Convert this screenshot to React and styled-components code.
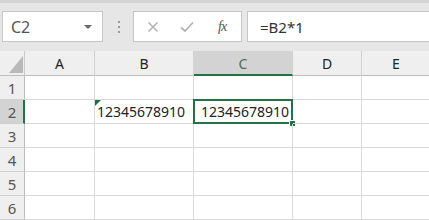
import React from "react";
import styled, { createGlobalStyle } from "styled-components";

const GREEN = "#217346";

const Global = createGlobalStyle`
  body {
    margin: 0;
    background: #ffffff;
    font-family: "Noto Sans", "Noto Sans CJK JP", sans-serif;
  }
`;

const Page = styled.div`
  width: 429px;
  height: 220px;
  overflow: hidden;
  background: #ffffff;
`;

// 数式バー
const Toolbar = styled.div`
  display: flex;
  align-items: center;
  height: 51px;
  box-sizing: border-box;
  border-top: 3px solid #d4d4d4;
  padding: 8px 0 9px 2px;
  background: #e6e6e6;
`;

const NameBox = styled.div`
  width: 101px;
  height: 31px;
  box-sizing: border-box;
  display: flex;
  align-items: center;
  justify-content: space-between;
  padding: 0 10px 0 8px;
  background: #fff;
  border: 1px solid #c6c6c6;
  color: #555;
  font-size: 16px;
`;

const Caret = styled.span`
  width: 0;
  height: 0;
  border-left: 4px solid transparent;
  border-right: 4px solid transparent;
  border-top: 4px solid #666;
  margin-top: 1px;
`;

const Grip = styled.div`
  display: flex;
  flex-direction: column;
  gap: 3px;
  margin: 0 13px 0 15px;
  span {
    width: 2px;
    height: 2px;
    background: #9a9a9a;
  }
`;

const ButtonGroup = styled.div`
  width: 109px;
  height: 31px;
  box-sizing: border-box;
  display: flex;
  align-items: center;
  background: #fff;
  border: 1px solid #c6c6c6;
  margin-right: 5px;
`;

const IconSlot = styled.div`
  width: ${(p) => p.$w}px;
  display: flex;
  justify-content: center;
  align-items: center;
  color: ${(p) => p.$color || "#b5b5b5"};
`;

const Fx = styled.span`
  font-family: "Liberation Serif", serif;
  font-style: italic;
  font-size: 14px;
  color: #555;
  letter-spacing: -1px;
`;

const FormulaInput = styled.div`
  flex: 1;
  height: 31px;
  box-sizing: border-box;
  display: flex;
  align-items: center;
  padding-left: 12px;
  background: #fff;
  border: 1px solid #c6c6c6;
  border-right: none;
  color: #333;
  font-size: 15px;
`;

// シート
const Sheet = styled.div`
  display: grid;
  grid-template-columns: 25px 70px 99px 99px 69px 69px;
  grid-template-rows: 25px repeat(6, 24px);
`;

const Corner = styled.div`
  background: #efefef;
  border-right: 1px solid #c9c9c9;
  border-bottom: 1px solid #bdbdbd;
  display: flex;
  align-items: flex-end;
  justify-content: flex-end;
  padding: 0 1px 2px 0;
  &::after {
    content: "";
    width: 0;
    height: 0;
    border-left: 14px solid transparent;
    border-bottom: 17px solid #b9b9b9;
  }
`;

const ColHead = styled.div`
  display: flex;
  align-items: center;
  justify-content: center;
  background: ${(p) => (p.$active ? "#d3d3d3" : "#efefef")};
  border-right: 1px solid #d0d0d0;
  border-bottom: ${(p) => (p.$active ? `2px solid ${GREEN}` : "1px solid #bdbdbd")};
  color: ${(p) => (p.$active ? "#4d6e58" : "#222")};
  font-size: 14px;
  padding-top: ${(p) => (p.$active ? "1px" : "0")};
`;

const RowHead = styled.div`
  display: flex;
  align-items: center;
  justify-content: center;
  background: ${(p) => (p.$active ? "#d3d3d3" : "#efefef")};
  border-right: ${(p) => (p.$active ? `2px solid ${GREEN}` : "1px solid #bdbdbd")};
  border-bottom: 1px solid #d0d0d0;
  color: #555;
  font-size: 15px;
  padding-left: ${(p) => (p.$active ? "1px" : "0")};
`;

const Cell = styled.div`
  position: relative;
  display: flex;
  align-items: center;
  justify-content: ${(p) => (p.$align === "right" ? "flex-end" : "flex-start")};
  padding: 0 ${(p) => (p.$align === "right" ? "3px" : "0")} 0 ${(p) => (p.$align === "right" ? "0" : "2px")};
  border-right: 1px solid #d9d9d9;
  border-bottom: 1px solid #d9d9d9;
  color: #222;
  font-size: 14px;
  white-space: nowrap;
`;

const ErrorMark = styled.span`
  position: absolute;
  top: 0;
  left: 0;
  width: 0;
  height: 0;
  border-top: 6px solid #1e7145;
  border-right: 6px solid transparent;
`;

const Selection = styled.span`
  position: absolute;
  top: -1px;
  left: -1px;
  right: -1px;
  bottom: -1px;
  border: 2px solid ${GREEN};
  pointer-events: none;
  &::after {
    content: "";
    position: absolute;
    right: -5px;
    bottom: -5px;
    width: 5px;
    height: 5px;
    background: ${GREEN};
    border: 1px solid #fff;
  }
`;

const cols = ["A", "B", "C", "D", "E"];
const rows = [1, 2, 3, 4, 5, 6];

function CrossIcon() {
  return (
    <svg width="12" height="12" viewBox="0 0 12 12">
      <path d="M1.5 1.5 L10.5 10.5 M10.5 1.5 L1.5 10.5" stroke="currentColor" strokeWidth="1.6" fill="none" />
    </svg>
  );
}

function CheckIcon() {
  return (
    <svg width="14" height="12" viewBox="0 0 14 12">
      <path d="M1 6.5 L5 10 L13 1.5" stroke="currentColor" strokeWidth="1.8" fill="none" />
    </svg>
  );
}

export default function App() {
  const renderCell = (r, c) => {
    if (r === 2 && c === "B") {
      return (
        <Cell key={c + r}>
          <ErrorMark />
          12345678910
        </Cell>
      );
    }
    if (r === 2 && c === "C") {
      return (
        <Cell key={c + r} $align="right">
          12345678910
          <Selection />
        </Cell>
      );
    }
    return <Cell key={c + r} />;
  };

  return (
    <Page>
      <Global />
      <Toolbar>
        <NameBox>
          C2
          <Caret />
        </NameBox>
        <Grip>
          <span />
          <span />
          <span />
        </Grip>
        <ButtonGroup>
          <IconSlot $w={38}>
            <CrossIcon />
          </IconSlot>
          <IconSlot $w={32}>
            <CheckIcon />
          </IconSlot>
          <IconSlot $w={38}>
            <Fx>fx</Fx>
          </IconSlot>
        </ButtonGroup>
        <FormulaInput>=B2*1</FormulaInput>
      </Toolbar>
      <Sheet>
        <Corner />
        {cols.map((c) => (
          <ColHead key={c} $active={c === "C"}>
            {c}
          </ColHead>
        ))}
        {rows.map((r) => (
          <React.Fragment key={r}>
            <RowHead $active={r === 2}>{r}</RowHead>
            {cols.map((c) => renderCell(r, c))}
          </React.Fragment>
        ))}
      </Sheet>
    </Page>
  );
}
